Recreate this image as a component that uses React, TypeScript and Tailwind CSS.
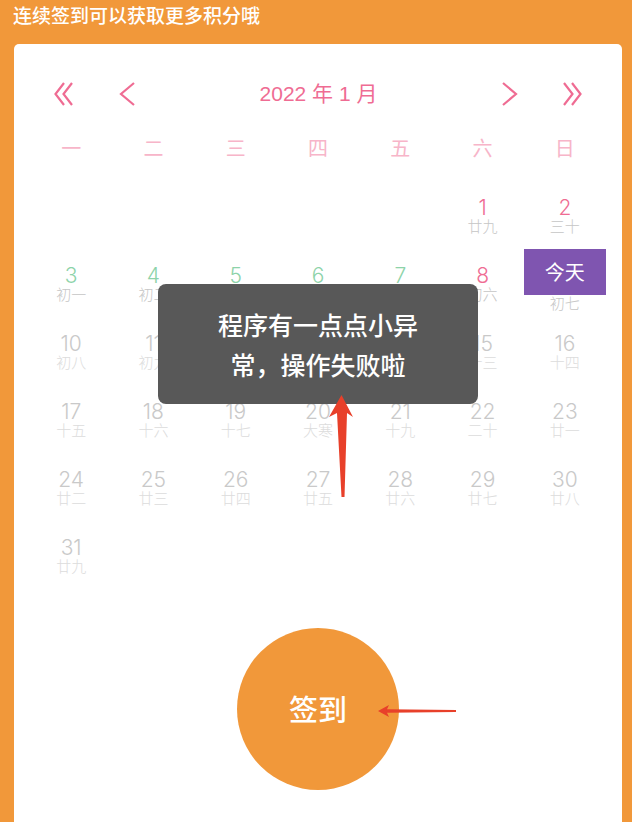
import React from "react";

type Day = { d: number; l: string; kind: "pink" | "green" | "gray" | "today" };

const lunar = [
  "廿九", "三十", "初一", "初二", "小寒", "初四", "初五", "初六", "初七", "初八",
  "初九", "初十", "十一", "十二", "十三", "十四", "十五", "十六", "十七", "大寒",
  "十九", "二十", "廿一", "廿二", "廿三", "廿四", "廿五", "廿六", "廿七", "廿八", "廿九",
];

const days: Day[] = lunar.map((l, i) => {
  const d = i + 1;
  let kind: Day["kind"] = "gray";
  if (d === 1 || d === 2 || d === 8) kind = "pink";
  else if (d >= 3 && d <= 7) kind = "green";
  else if (d === 9) kind = "today";
  return { d, l, kind };
});

const weekdays = ["一", "二", "三", "四", "五", "六", "日"];

function DoubleLeft() {
  return (
    <svg width="20" height="24" viewBox="0 0 20 24" fill="none" stroke="#EF6C93" strokeWidth="2.2">
      <polyline points="11,1 2.5,12 11,23" />
      <polyline points="19,1 10.5,12 19,23" />
    </svg>
  );
}
function DoubleRight() {
  return (
    <svg width="20" height="24" viewBox="0 0 20 24" fill="none" stroke="#EF6C93" strokeWidth="2.2">
      <polyline points="1,1 9.5,12 1,23" />
      <polyline points="9,1 17.5,12 9,23" />
    </svg>
  );
}
function Left() {
  return (
    <svg width="16" height="24" viewBox="0 0 16 24" fill="none" stroke="#EF6C93" strokeWidth="2.2">
      <polyline points="15,1 2,12 15,23" />
    </svg>
  );
}
function Right() {
  return (
    <svg width="16" height="24" viewBox="0 0 16 24" fill="none" stroke="#EF6C93" strokeWidth="2.2">
      <polyline points="1,1 14,12 1,23" />
    </svg>
  );
}

function Cell({ day }: { day: Day }) {
  if (day.kind === "today") {
    return (
      <div className="h-[68px] flex flex-col items-center justify-start">
        <div className="w-full h-[46px] bg-[#7F55B0] flex items-center justify-center text-white text-[20px] leading-none">
          今天
        </div>
        <div className="text-[15px] leading-[15px] font-light text-[#C6C6C6]">{day.l}</div>
      </div>
    );
  }
  const numColor =
    day.kind === "pink" ? "text-[#EF6C93]" : day.kind === "green" ? "text-[#8DD3A9]" : "text-[#C9C9C9]";
  const lunarColor = day.kind === "gray" ? "text-[#DCDCDC]" : "text-[#C6C6C6]";
  return (
    <div className="h-[68px] flex flex-col items-center justify-center">
      <div
        className={`text-[21px] leading-[20px] font-light ${numColor}`}
        style={{ fontFamily: "Inter, sans-serif" }}
      >
        {day.d}
      </div>
      <div className={`text-[15px] leading-[15px] font-light ${lunarColor}`}>{day.l}</div>
    </div>
  );
}

export default function App() {
  const cells: (Day | null)[] = [null, null, null, null, null, ...days];
  return (
    <div
      className="relative w-[632px] h-[822px] bg-[#F1983A] flex flex-col overflow-hidden"
      style={{ fontFamily: '"Noto Sans CJK SC", sans-serif' }}
    >
      <div className="h-[44px] pl-[13px] text-white text-[19px] leading-[30px] font-medium">
        连续签到可以获取更多积分哦
      </div>
      <div className="ml-[14px] mr-[10px] flex-1 bg-white rounded-t-[5px] px-[16px]">
        <div className="mt-[30px] h-[40px] flex items-center px-[23px]">
          <DoubleLeft />
          <div className="ml-[46px]">
            <Left />
          </div>
          <div
            className="flex-1 text-center text-[21px] text-[#EF6C93]"
            style={{ fontFamily: '"Liberation Sans", "Noto Sans CJK SC", sans-serif' }}
          >
            2022 年 1 月
          </div>
          <div className="mr-[45px]">
            <Right />
          </div>
          <DoubleRight />
        </div>
        <div className="mt-[14px] h-[40px] grid grid-cols-7">
          {weekdays.map((w) => (
            <div key={w} className="flex items-center justify-center text-[20px] text-[#F7B5C9]">
              {w}
            </div>
          ))}
        </div>
        <div className="mt-[13px] grid grid-cols-7">
          {cells.map((c, i) => (c ? <Cell key={i} day={c} /> : <div key={i} className="h-[68px]" />))}
        </div>
        <div className="mt-[39px] flex justify-center">
          <div className="w-[162px] h-[162px] rounded-full bg-[#F1983A] flex items-center justify-center text-white text-[29px] font-medium">
            签到
          </div>
        </div>
      </div>

      <div className="absolute left-[158px] top-[284px] w-[320px] h-[120px] rounded-[8px] bg-[#585858] flex flex-col items-center justify-center text-white text-[25px] leading-[40px] font-medium">
        <div>程序有一点点小异</div>
        <div>常，操作失败啦</div>
      </div>

      <svg className="absolute left-0 top-0" width="632" height="822" viewBox="0 0 632 822">
        <polygon
          points="341.5,395 353,417 347,413 344.5,497 341.5,497 337,413 329,417"
          fill="#E8402A"
        />
        <polygon
          points="378,711 389,705 387,709.3 456,710 456,712 387,712.7 389,717"
          fill="#E8402A"
        />
      </svg>
    </div>
  );
}
